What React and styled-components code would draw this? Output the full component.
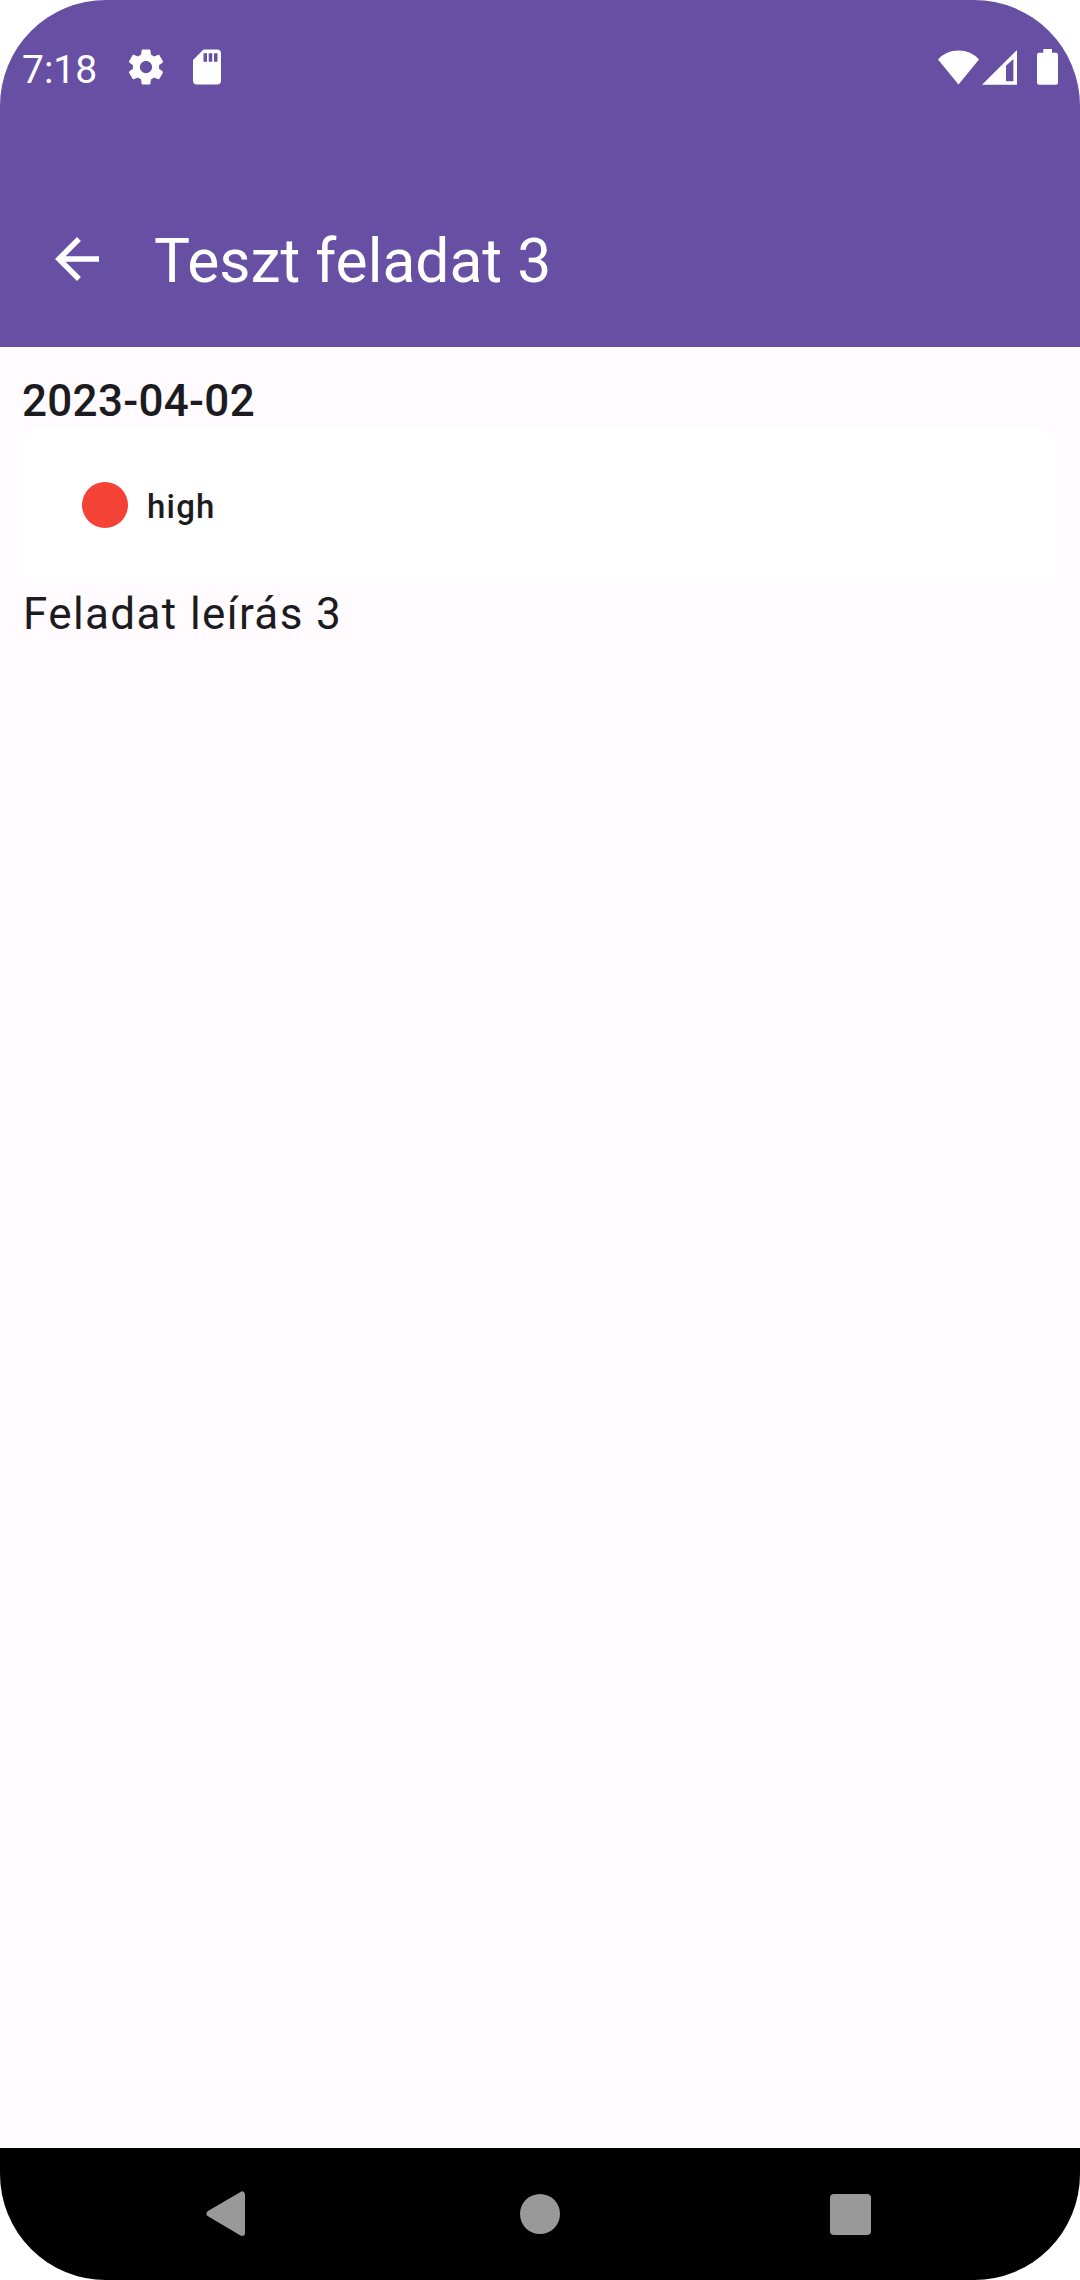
import React from "react";
import styled, { createGlobalStyle } from "styled-components";

const GlobalStyle = createGlobalStyle`
  body { margin: 0; background: #fff; }
  * { box-sizing: border-box; }
`;

const Screen = styled.main`
  width: 1080px;
  height: 2280px;
  display: flex;
  flex-direction: column;
  overflow: hidden;
  border-radius: 106px;
  background: #fffbfe;
  color: #1c1b1f;
  font-family: Roboto, sans-serif;
`;

const Header = styled.header`
  height: 347px;
  flex: none;
  display: flex;
  flex-direction: column;
  justify-content: space-between;
  background: #6750a4;
  color: #fff;
`;

const StatusBar = styled.div`
  height: 136px;
  display: flex;
  justify-content: space-between;
  padding: 46px 22px 0 22px;
`;

const StatusGroup = styled.div`
  display: flex;
  align-items: flex-start;
`;

const Clock = styled.time`
  width: 103px;
  font-size: 39px;
  line-height: 48px;
`;

const Icon = styled.svg`
  display: block;
  flex: none;
  width: ${(p) => p.$w}px;
  height: ${(p) => p.$h ?? p.$w}px;
  margin-left: ${(p) => p.$gap ?? 0}px;
  fill: currentColor;
`;

const Toolbar = styled.div`
  height: 176px;
  display: flex;
  align-items: center;
  padding-left: 44px;
  gap: 44px;
`;

const BackButton = styled.button`
  padding: 0;
  border: 0;
  background: none;
  color: inherit;
`;

const Title = styled.h1`
  margin: 0;
  padding-top: 4px;
  font-size: 60.5px;
  font-weight: 400;
  line-height: 77px;
`;

const Content = styled.section`
  flex: 1;
  padding: 22px 22px 0;
`;

const DateLabel = styled.p`
  margin: 0;
  padding-top: 2px;
  height: 59px;
  font-size: 44px;
  font-weight: 500;
  line-height: 60px;
  letter-spacing: 0.3px;
`;

const PriorityCard = styled.div`
  height: 154px;
  display: flex;
  align-items: center;
  gap: 19.5px;
  padding-left: 59.5px;
  border-radius: 16px;
  background: #fff;
`;

const PriorityDot = styled.span`
  width: 46px;
  height: 46px;
  border-radius: 50%;
  background: #f44336;
`;

const PriorityLabel = styled.span`
  padding-top: 3px;
  font-size: 33px;
  font-weight: 500;
  line-height: 44px;
  letter-spacing: 1.2px;
`;

const Description = styled.p`
  margin: 0;
  padding-left: 1px;
  font-size: 44px;
  line-height: 64px;
  letter-spacing: 1.375px;
`;

const NavBar = styled.nav`
  height: 132px;
  flex: none;
  display: flex;
  justify-content: space-between;
  align-items: center;
  padding: 0 206px;
  background: #000;
  color: #999;
`;

export default function App() {
  return (
    <>
      <GlobalStyle />
      <Screen>
        <Header>
          <StatusBar>
            <StatusGroup>
              <Clock>7:18</Clock>
              <Icon $w={42} viewBox="0 0 24 24">
                <path d="M19.43 12.98c.04-.32.07-.64.07-.98s-.03-.66-.07-.98l2.11-1.65c.19-.15.24-.42.12-.64l-2-3.46c-.12-.22-.39-.3-.61-.22l-2.49 1c-.52-.4-1.08-.73-1.69-.98l-.38-2.65C14.46 2.18 14.25 2 14 2h-4c-.25 0-.46.18-.49.42l-.38 2.65c-.61.25-1.17.59-1.69.98l-2.49-1c-.23-.09-.49 0-.61.22l-2 3.46c-.13.22-.07.49.12.64l2.11 1.65c-.04.32-.07.65-.07.98s.03.66.07.98l-2.11 1.65c-.19.15-.24.42-.12.64l2 3.46c.12.22.39.3.61.22l2.49-1c.52.4 1.08.73 1.69.98l.38 2.65c.03.24.24.42.49.42h4c.25 0 .46-.18.49-.42l.38-2.65c.61-.25 1.17-.59 1.69-.98l2.49 1c.23.09.49 0 .61-.22l2-3.46c.12-.22.07-.49-.12-.64l-2.11-1.65zM12 15.5c-1.93 0-3.5-1.57-3.5-3.5s1.57-3.5 3.5-3.5 3.5 1.57 3.5 3.5-1.57 3.5-3.5 3.5z" />
              </Icon>
              <Icon $w={42} $gap={19.4} viewBox="0 0 24 24">
                <path d="M18 2h-8L4.02 8 4 20c0 1.1.9 2 2 2h12c1.1 0 2-.9 2-2V4c0-1.1-.9-2-2-2zm-6 7h-2V4.2h2V9zm3 0h-2V4.2h2V9zm3 0h-2V4.2h2V9z" />
              </Icon>
            </StatusGroup>
            <StatusGroup>
              <Icon $w={41} $h={39} viewBox="938 46 41 39">
                <path d="M938 59.5Q946 50.5 958.5 50.5T979 59.5L958.5 84.6Z" />
              </Icon>
              <Icon $w={35} $h={39} $gap={3} viewBox="982 46 35 39">
                <path fillRule="evenodd" d="M982 84.7L1017 50V84.7ZM1006 81.3H1013.4V59L1006 65.7Z" />
              </Icon>
              <Icon $w={21} $h={39} $gap={20} viewBox="1037 46 21 39">
                <path d="M1043.3 49H1052V52.8H1056Q1058 52.8 1058 54.8V82.7Q1058 84.7 1056 84.7H1039Q1037 84.7 1037 82.7V54.8Q1037 52.8 1039 52.8H1043.3Z" />
              </Icon>
            </StatusGroup>
          </StatusBar>
          <Toolbar>
            <BackButton aria-label="Back">
              <Icon $w={66} viewBox="0 0 24 24">
                <path d="M20 11H7.83l5.59-5.59L12 4l-8 8 8 8 1.41-1.41L7.83 13H20v-2z" />
              </Icon>
            </BackButton>
            <Title>Teszt feladat 3</Title>
          </Toolbar>
        </Header>
        <Content>
          <DateLabel>2023-04-02</DateLabel>
          <PriorityCard>
            <PriorityDot />
            <PriorityLabel>high</PriorityLabel>
          </PriorityCard>
          <Description>Feladat leírás 3</Description>
        </Content>
        <NavBar>
          <Icon $w={44} $h={46} viewBox="0 0 44 46">
            <path d="M3.5 22.7L36 3.5V42Z" stroke="currentColor" strokeWidth="6" strokeLinejoin="round" />
          </Icon>
          <Icon $w={40} viewBox="0 0 40 40">
            <circle cx="20" cy="20" r="20" />
          </Icon>
          <Icon $w={44} viewBox="0 0 44 44">
            <rect y="2" width="41" height="41" rx="4" />
          </Icon>
        </NavBar>
      </Screen>
    </>
  );
}
